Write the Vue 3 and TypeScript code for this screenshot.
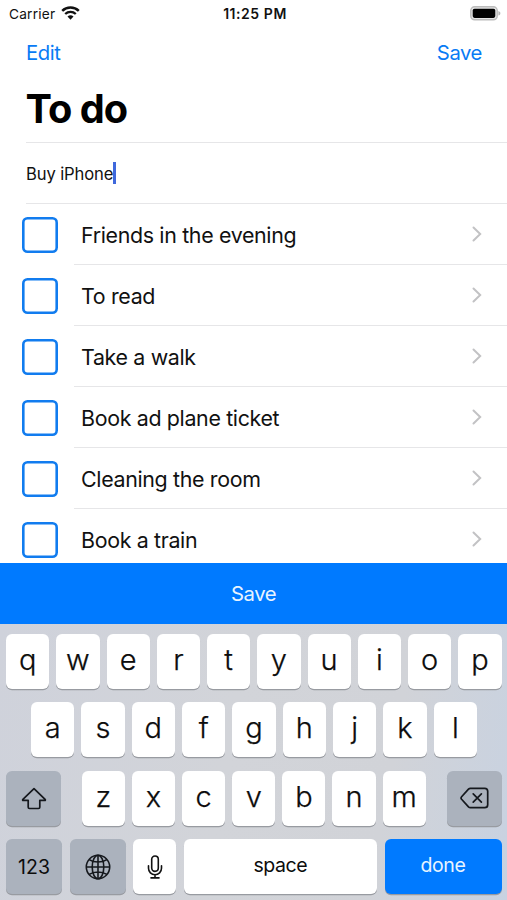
<script setup lang="ts">
import { ref } from 'vue'

interface Todo {
  id: number
  title: string
}

const draft = ref<string>('Buy iPhone')

const todos = ref<Todo[]>([
  { id: 1, title: 'Friends in the evening' },
  { id: 2, title: 'To read' },
  { id: 3, title: 'Take a walk' },
  { id: 4, title: 'Book ad plane ticket' },
  { id: 5, title: 'Cleaning the room' },
  { id: 6, title: 'Book a train' },
])

const topKeys: string[] = [...'qwertyuiop']
const homeKeys: string[] = [...'asdfghjkl']
const bottomKeys: string[] = [...'zxcvbnm']

function typeKey(key: string): void {
  draft.value += key
}

function eraseKey(): void {
  draft.value = draft.value.slice(0, -1)
}
</script>

<template>
  <div class="phone">
    <header class="status">
      <div class="carrier">
        <span>Carrier</span>
        <svg class="wifi" width="19" height="14" viewBox="0 0 19 14">
          <path d="M1.2 4.9a11.9 11.9 0 0 1 16.6 0" fill="none" stroke="#111" stroke-width="2.5" />
          <path d="M4.2 8a7.6 7.6 0 0 1 10.6 0" fill="none" stroke="#111" stroke-width="2.3" />
          <path d="M9.5 13.7 6.5 10.6a4.3 4.3 0 0 1 6 0z" fill="#111" />
        </svg>
      </div>
      <div class="clock">11:25 PM</div>
      <svg class="battery" width="31" height="15" viewBox="0 0 31 15">
        <rect x="0.8" y="0.8" width="26.4" height="13" rx="3.8" fill="#e6e6e6" stroke="#bcbcbc" stroke-width="1.5" />
        <rect x="2.7" y="2.7" width="22.6" height="9.2" rx="1.8" fill="#000" />
        <path d="M28.4 5c2.6.8 2.6 3.8 0 4.600z" fill="#b4b4b4" />
      </svg>
    </header>

    <nav class="nav">
      <span class="link edit">Edit</span>
      <span class="link save">Save</span>
    </nav>

    <h1 class="title"><span>To do</span></h1>

    <div class="entry">
      <span class="draft">{{ draft }}</span><span class="caret"></span>
    </div>

    <ul class="list">
      <li v-for="todo in todos" :key="todo.id" class="item">
        <span class="box"></span>
        <div class="body">
          <span class="name">{{ todo.title }}</span>
          <svg class="chevron" width="10" height="16" viewBox="0 0 10 16">
            <path d="M1.5 1.5 8.200 8l-6.700 6.500" fill="none" stroke="#c2c2c4" stroke-width="2" stroke-linecap="round" stroke-linejoin="miter" />
          </svg>
        </div>
      </li>
    </ul>

    <div class="savebar"><span>Save</span></div>

    <div class="keyboard">
      <div class="row">
        <div v-for="k in topKeys" :key="k" class="key" @click="typeKey(k)"><span>{{ k }}</span></div>
      </div>
      <div class="row home">
        <div v-for="k in homeKeys" :key="k" class="key" @click="typeKey(k)"><span>{{ k }}</span></div>
      </div>
      <div class="row split">
        <div class="key dark side">
          <svg class="shift" width="26" height="24" viewBox="0 0 26 24">
            <path d="M13 1.700 1.900 12.400c-.5.5-.3 1 .4 1h4.900v6.800c0 .8.5 1.300 1.300 1.300h9c.8 0 1.300-.5 1.300-1.300v-6.800h4.900c.7 0 .9-.5.4-1z" fill="none" stroke="#15181d" stroke-width="1.700" stroke-linejoin="round" />
          </svg>
        </div>
        <div class="letters">
          <div v-for="k in bottomKeys" :key="k" class="key" @click="typeKey(k)"><span>{{ k }}</span></div>
        </div>
        <div class="key dark side" @click="eraseKey">
          <svg width="29" height="22" viewBox="0 0 29 22">
            <path d="M10.400 1.300h14.300a3 3 0 0 1 3 3v13.400a3 3 0 0 1-3 3H10.400a2.600 2.600 0 0 1-1.900-.8L1.600 12.300a2 2 0 0 1 0-2.600L8.500 2.100a2.600 2.600 0 0 1 1.900-.8z" fill="none" stroke="#15181d" stroke-width="1.700" stroke-linejoin="round" />
            <path d="m13.200 6.900 8.200 8.200m0-8.200-8.200 8.200" fill="none" stroke="#15181d" stroke-width="1.700" stroke-linecap="round" />
          </svg>
        </div>
      </div>
      <div class="row last">
        <div class="key dark word digits"><span>123</span></div>
        <div class="key dark">
          <svg width="26" height="26" viewBox="0 0 26 26" fill="none" stroke="#15181d" stroke-width="1.600">
            <circle cx="13" cy="13" r="11.700" />
            <ellipse cx="13" cy="13" rx="5.800" ry="11.700" />
            <path d="M13 1.300v23.400M1.300 13h23.400M4.200 5.600c4.800 3.200 12.800 3.200 17.600 0M4.200 20.400c4.800-3.200 12.800-3.200 17.600 0" />
          </svg>
        </div>
        <div class="key">
          <svg width="16" height="24" viewBox="0 0 16 24" fill="none" stroke="#111" stroke-width="1.600" stroke-linecap="round">
            <rect x="4.700" y="1" width="6.600" height="15.400" rx="3.300" />
            <path d="M1.500 10.800v2.500a6.500 6.500 0 0 0 13 0v-2.500M8 19.800v3M4 22.900h8" />
          </svg>
        </div>
        <div class="key word"><span>space</span></div>
        <div class="key word done"><span>done</span></div>
      </div>
    </div>
  </div>
</template>

<style>
body {
  margin: 0;
  background: #fff;
}
</style>

<style scoped>
.phone {
  display: flex;
  flex-direction: column;
  width: 507px;
  height: 900px;
  overflow: hidden;
  box-sizing: border-box;
  background: #fff;
  color: #111;
  font-family: Inter, 'Liberation Sans', sans-serif;
}
.status {
  display: grid;
  grid-template-columns: 1fr auto 1fr;
  align-items: center;
  flex: none;
  height: 27px;
  padding: 0 6px 0 9px;
  font-size: 13.700px;
}
.carrier {
  display: flex;
  align-items: center;
  gap: 5.500px;
  letter-spacing: 0.200px;
}
.wifi {
  margin-bottom: 1px;
}
.clock {
  font-size: 14px;
  font-weight: 600;
  letter-spacing: 0.550px;
}
.battery {
  justify-self: end;
}
.nav {
  display: flex;
  justify-content: space-between;
  align-items: center;
  box-sizing: border-box;
  flex: none;
  height: 50px;
  padding: 1px 25px 0 26px;
}
.link {
  font-size: 20.300px;
  letter-spacing: -0.450px;
  color: #087bf5;
}
.title {
  display: flex;
  align-items: center;
  box-sizing: border-box;
  flex: none;
  height: 66px;
  margin: 0 0 0 26px;
  padding-bottom: 1px;
  border-bottom: 1px solid #e6e6e8;
  font-size: 39.700px;
  font-weight: 700;
  letter-spacing: -1px;
  color: #000;
}
.title span {
  margin-left: -0.500px;
}
.entry {
  display: flex;
  align-items: center;
  flex: none;
  height: 60px;
  margin-left: 26px;
  border-bottom: 1px solid #e6e6e8;
  font-size: 16.600px;
}
.draft {
  padding-top: 1px;
  letter-spacing: -0.120px;
}
.caret {
  width: 2.500px;
  height: 22px;
  background: #3f68dc;
}
.list {
  flex: none;
  height: 359px;
  margin: 0;
  padding: 0;
  overflow: hidden;
  list-style: none;
}
.item {
  display: flex;
  align-items: center;
  height: 61px;
  padding-left: 22px;
}
.box {
  flex: none;
  width: 36px;
  height: 36px;
  border-radius: 5.500px;
  box-shadow: inset 0 0 0 2.600px #117cef;
}
.body {
  display: flex;
  flex: 1;
  align-items: center;
  justify-content: space-between;
  box-sizing: border-box;
  height: 100%;
  margin-left: 16px;
  padding: 0 25px 0 7px;
  border-bottom: 1px solid #e6e6e8;
}
.name {
  padding-top: 2px;
  font-size: 21.400px;
  letter-spacing: -0.340px;
}
.savebar {
  display: flex;
  align-items: center;
  justify-content: center;
  flex: none;
  height: 61px;
  background: #007aff;
  color: #e8f4ff;
  font-size: 20.300px;
  letter-spacing: -0.500px;
}
.keyboard {
  display: flex;
  flex-direction: column;
  flex: 1;
  gap: 13.400px;
  padding: 10px 5.500px 0 6px;
  background: linear-gradient(100deg, #cfd2db 0%, #d2d4d9 45%, #d1d3d8 75%, #c8d2e1 100%);
}
.row {
  display: flex;
  gap: 7px;
  height: 55px;
}
.home {
  padding: 0 24.500px 0 25px;
}
.split {
  justify-content: space-between;
}
.letters {
  display: flex;
  gap: 7px;
  width: 344px;
}
.last {
  display: grid;
  grid-template-columns: 56px 56px 43px 193.500px 1fr;
  column-gap: 7.500px;
}
.key {
  display: flex;
  flex: 1 1 0;
  align-items: center;
  justify-content: center;
  min-width: 0;
  border-radius: 6px;
  background: #fff;
  box-shadow: 0 1.300px 0.500px #989ba1;
  color: #0c0c0c;
  font-size: 29px;
  font-weight: 300;
  -webkit-text-stroke: 0.250px currentColor;
}
.key span {
  padding-bottom: 4px;
}
.side {
  flex: 0 0 55px;
}
.shift {
  margin-top: 2px;
}
.dark {
  background: #abb2bd;
}
.word {
  font-size: 19.500px;
  font-weight: 400;
  letter-spacing: -0.450px;
  -webkit-text-stroke: 0;
}
.digits {
  letter-spacing: 0;
}
.digits span {
  padding-bottom: 0;
}
.done {
  background: #007aff;
  color: #e8f4ff;
  letter-spacing: -0.400px;
}
</style>
